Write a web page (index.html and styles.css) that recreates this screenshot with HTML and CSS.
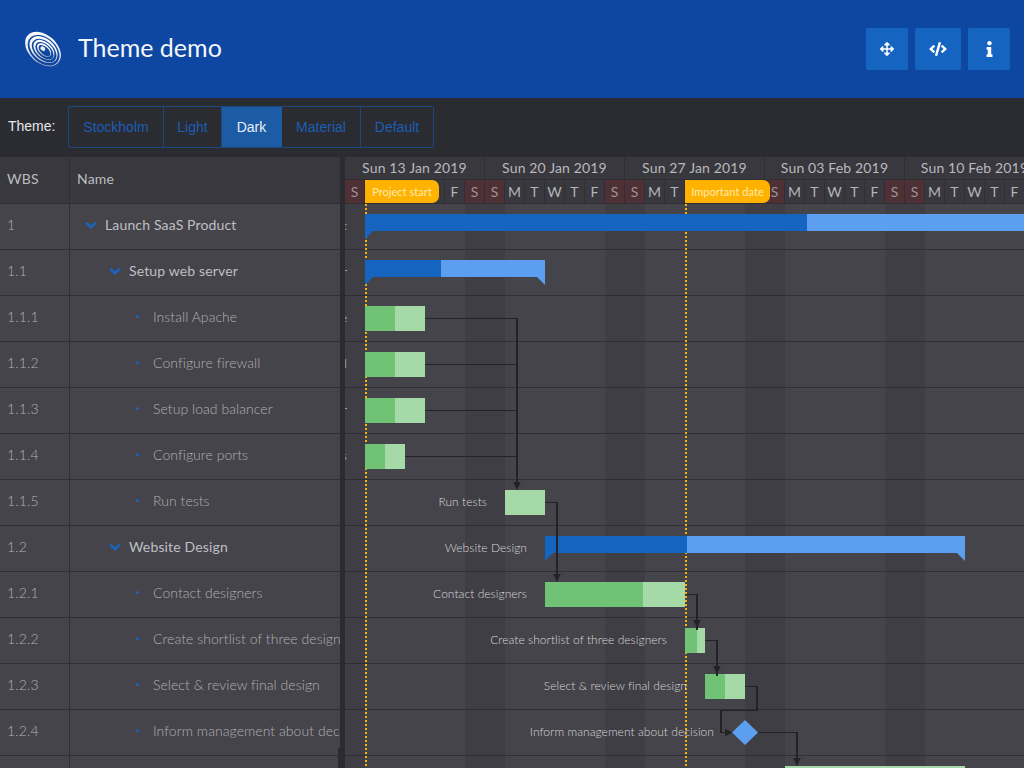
FILE: index.html
```html
<!DOCTYPE html>
<html lang="en">
<head>
<meta charset="utf-8">
<title>Theme demo</title>
<link rel="stylesheet" href="styles.css">
</head>
<body>
<div class="app">
  <header class="top">
    <svg class="logo" viewBox="0 0 36 36" aria-hidden="true">
      <defs>
        <linearGradient id="lg" x1="0" y1="0" x2="1" y2="1">
          <stop offset="0" stop-color="#ffffff"/>
          <stop offset="0.55" stop-color="#eef0f4"/>
          <stop offset="1" stop-color="#9da2ab"/>
        </linearGradient>
      </defs>
      <g transform="rotate(42 18 18)">
        <ellipse cx="18" cy="18" rx="20.5" ry="14" fill="url(#lg)"/>
        <ellipse cx="19.25" cy="18.5" rx="18.25" ry="12.4" fill="#0d47a1"/>
        <ellipse cx="18.75" cy="18" rx="16.25" ry="10.8" fill="url(#lg)"/>
        <ellipse cx="19.85" cy="18.4" rx="14.35" ry="9.2" fill="#0d47a1"/>
        <ellipse cx="19.25" cy="18" rx="12.25" ry="7.8" fill="url(#lg)"/>
        <ellipse cx="20.25" cy="18.3" rx="10.75" ry="6.4" fill="#0d47a1"/>
        <ellipse cx="19.5" cy="18" rx="8.5" ry="5" fill="url(#lg)"/>
        <ellipse cx="20.2" cy="18.2" rx="7.2" ry="3.8" fill="#0d47a1"/>
        <ellipse cx="17.75" cy="18" rx="2.75" ry="2" fill="url(#lg)"/>
      </g>
    </svg>
    <h1 class="title">Theme demo</h1>
    <div class="actions">
      <button class="act"><svg class="ico" viewBox="0 0 512 512"><path d="M352.201 425.775l-79.196 79.196c-9.373 9.373-24.568 9.373-33.941 0l-79.196-79.196c-15.119-15.119-4.411-40.971 16.971-40.97h51.162L228 284H127.196v51.162c0 21.382-25.851 32.09-40.971 16.971L7.029 272.937c-9.373-9.373-9.373-24.569 0-33.941L86.225 159.8c15.119-15.119 40.971-4.411 40.971 16.971V228H228V127.196h-51.23c-21.382 0-32.09-25.851-16.971-40.971l79.196-79.196c9.373-9.373 24.568-9.373 33.941 0l79.196 79.196c15.119 15.119 4.411 40.971-16.971 40.971h-51.162V228h100.804v-51.162c0-21.382 25.851-32.09 40.97-16.971l79.196 79.196c9.373 9.373 9.373 24.569 0 33.941L425.773 352.2c-15.119 15.119-40.971 4.411-40.97-16.971V284H284v100.804h51.23c21.382 0 32.09 25.851 16.971 40.971z"/></svg></button>
      <button class="act wide"><svg class="ico code" viewBox="0 0 640 512"><path d="M278.9 511.5l-61-17.7c-6.4-1.8-10-8.5-8.2-14.9L346.2 8.7c1.8-6.4 8.5-10 14.9-8.2l61 17.7c6.4 1.8 10 8.5 8.2 14.9L293.8 503.3c-1.9 6.4-8.5 10.1-14.9 8.2zm-114-112.2l43.5-46.4c4.6-4.9 4.3-12.7-.8-17.2L117 256l90.6-79.7c5.1-4.5 5.5-12.3.8-17.2l-43.5-46.4c-4.5-4.8-12.1-5.1-17-.5L3.8 247.2c-5.1 4.7-5.1 12.8 0 17.5l144.1 135.1c4.9 4.6 12.5 4.4 17-.5zm327.2.6l144.1-135.1c5.1-4.7 5.1-12.8 0-17.5L492.1 112.1c-4.8-4.5-12.4-4.3-17 .5L431.6 159c-4.6 4.9-4.3 12.7.8 17.2L523 256l-90.6 79.7c-5.1 4.5-5.5 12.3-.8 17.2l43.5 46.4c4.5 4.9 12.1 5.1 17 .6z"/></svg></button>
      <button class="act"><svg class="ico info" viewBox="0 0 192 512"><path d="M20 424.229h20V279.771H20c-11.046 0-20-8.954-20-20V212c0-11.046 8.954-20 20-20h112c11.046 0 20 8.954 20 20v212.229h20c11.046 0 20 8.954 20 20V492c0 11.046-8.954 20-20 20H20c-11.046 0-20-8.954-20-20v-47.771c0-11.046 8.954-20 20-20zM96 0C56.235 0 24 32.235 24 72s32.235 72 72 72 72-32.235 72-72S135.764 0 96 0z"/></svg></button>
    </div>
  </header>

  <div class="toolbar">
    <span class="tlabel">Theme:</span>
    <div class="btngroup">
      <button class="tb t-stockholm">Stockholm</button>
      <button class="tb t-light">Light</button>
      <button class="tb t-dark on">Dark</button>
      <button class="tb t-material">Material</button>
      <button class="tb t-default">Default</button>
    </div>
  </div>

  <div class="gantt">
    <section class="left">
      <div class="row head">
        <div class="cwbs">WBS</div>
        <div class="cname">Name</div>
      </div>
      <div class="row"><div class="cwbs">1</div><div class="cname l1 parent"><svg class="chev" viewBox="0 0 12 8"><path d="M1.2 1.6 6 6.2l4.8-4.6"/></svg>Launch SaaS Product</div></div>
      <div class="row"><div class="cwbs">1.1</div><div class="cname l2 parent"><svg class="chev" viewBox="0 0 12 8"><path d="M1.2 1.6 6 6.2l4.8-4.6"/></svg>Setup web server</div></div>
      <div class="row"><div class="cwbs">1.1.1</div><div class="cname l3"><i class="dot"></i>Install Apache</div></div>
      <div class="row"><div class="cwbs">1.1.2</div><div class="cname l3"><i class="dot"></i>Configure firewall</div></div>
      <div class="row"><div class="cwbs">1.1.3</div><div class="cname l3"><i class="dot"></i>Setup load balancer</div></div>
      <div class="row"><div class="cwbs">1.1.4</div><div class="cname l3"><i class="dot"></i>Configure ports</div></div>
      <div class="row"><div class="cwbs">1.1.5</div><div class="cname l3"><i class="dot"></i>Run tests</div></div>
      <div class="row"><div class="cwbs">1.2</div><div class="cname l2 parent"><svg class="chev" viewBox="0 0 12 8"><path d="M1.2 1.6 6 6.2l4.8-4.6"/></svg>Website Design</div></div>
      <div class="row"><div class="cwbs">1.2.1</div><div class="cname l3"><i class="dot"></i>Contact designers</div></div>
      <div class="row"><div class="cwbs">1.2.2</div><div class="cname l3"><i class="dot"></i>Create shortlist of three designers</div></div>
      <div class="row"><div class="cwbs">1.2.3</div><div class="cname l3"><i class="dot"></i>Select &amp; review final design</div></div>
      <div class="row"><div class="cwbs">1.2.4</div><div class="cname l3"><i class="dot"></i>Inform management about decision</div></div>
      <div class="row"><div class="cwbs"></div><div class="cname l3"></div></div>
      <i class="scrollstub"></i>
    </section>
    <div class="splitter"></div>
    <section class="right">
      <div class="thead">
        <div class="weeks">
          <div class="week">Sun 13 Jan 2019</div>
          <div class="week">Sun 20 Jan 2019</div>
          <div class="week">Sun 27 Jan 2019</div>
          <div class="week">Sun 03 Feb 2019</div>
          <div class="week">Sun 10 Feb 2019</div>
        </div>
        <div class="days">
          <div class="day we">S</div><div class="day">M</div><div class="day">T</div><div class="day">W</div><div class="day">T</div><div class="day">F</div><div class="day we">S</div>
          <div class="day we">S</div><div class="day">M</div><div class="day">T</div><div class="day">W</div><div class="day">T</div><div class="day">F</div><div class="day we">S</div>
          <div class="day we">S</div><div class="day">M</div><div class="day">T</div><div class="day">W</div><div class="day">T</div><div class="day">F</div><div class="day we">S</div>
          <div class="day we">S</div><div class="day">M</div><div class="day">T</div><div class="day">W</div><div class="day">T</div><div class="day">F</div><div class="day we">S</div>
          <div class="day we">S</div><div class="day">M</div><div class="day">T</div><div class="day">W</div><div class="day">T</div><div class="day">F</div>
        </div>
        <div class="flag" style="left:20px;width:74px">Project start</div>
        <div class="flag" style="left:340px;width:85px">Important date</div>
      </div>
      <div class="tbody">
        <div class="trow"></div><div class="trow"></div><div class="trow"></div><div class="trow"></div><div class="trow"></div><div class="trow"></div><div class="trow"></div><div class="trow"></div><div class="trow"></div><div class="trow"></div><div class="trow"></div><div class="trow"></div><div class="trow"></div>

        <i class="band" style="left:0;width:20px"></i>
        <i class="band" style="left:120px"></i>
        <i class="band" style="left:260px"></i>
        <i class="band" style="left:400px"></i>
        <i class="band" style="left:540px"></i>

        <i class="vline" style="left:20px"></i>
        <i class="vline" style="left:340px"></i>

        <div class="bar parent-bar" style="left:20px;top:10px;width:760px"><b class="done" style="width:442px"></b><span class="lbl">Launch SaaS Product</span></div>
        <div class="bar parent-bar" style="left:20px;top:56px;width:180px"><b class="done" style="width:76px"></b><span class="lbl">Setup web server</span></div>
        <div class="bar task" style="left:20px;top:102px;width:60px"><b class="done" style="width:30px"></b><span class="lbl">Install Apache</span></div>
        <div class="bar task" style="left:20px;top:148px;width:60px"><b class="done" style="width:30px"></b><span class="lbl">Configure firewall</span></div>
        <div class="bar task" style="left:20px;top:194px;width:60px"><b class="done" style="width:30px"></b><span class="lbl">Setup load balancer</span></div>
        <div class="bar task" style="left:20px;top:240px;width:40px"><b class="done" style="width:20px"></b><span class="lbl">Configure ports</span></div>
        <div class="bar task" style="left:160px;top:286px;width:40px"><span class="lbl">Run tests</span></div>
        <div class="bar parent-bar" style="left:200px;top:332px;width:420px"><b class="done" style="width:142px"></b><span class="lbl">Website Design</span></div>
        <div class="bar task" style="left:200px;top:378px;width:140px"><b class="done" style="width:98px"></b><span class="lbl">Contact designers</span></div>
        <div class="bar task" style="left:340px;top:424px;width:20px"><b class="done" style="width:12px"></b><span class="lbl">Create shortlist of three designers</span></div>
        <div class="bar task" style="left:360px;top:470px;width:40px"><b class="done" style="width:20px"></b><span class="lbl">Select &amp; review final design</span></div>
        <div class="milestone" style="left:387px;top:516px"><i class="gem"></i><span class="lbl">Inform management about decision</span></div>
        <div class="bar task" style="left:440px;top:562px;width:180px"></div>

        <svg class="deps" viewBox="345 204 679 564" aria-hidden="true">
          <path class="h" d="M425 318.5H517M425 364.5H517M425 410.5H517M405 456.5H517M545 502.5H557M685 594.5H697M705 640.5H717M745 686.5H757M757 710.5H721M721 732.5H726M758 732.5H797"/>
          <path class="v" d="M517 318V484M557 502V576M697 594V630M717 640V676M757 686V711M721 710V733M797 732V760"/>
          <path class="a" d="M513.2 482h7.6L517 490zM553.2 574h7.6L557 582zM693.2 620h7.6L697 628zM713.2 666h7.6L717 674zM793.2 758h7.6L797 766zM725 728.7v7.6L732.5 732.5z"/>
        </svg>
      </div>
    </section>
  </div>
</div>
</body>
</html>
```

FILE: styles.css
```css
* { box-sizing: border-box; }
html, body { margin: 0; height: 100%; overflow: hidden; }
body { font-family: Lato, "Liberation Sans", sans-serif; background: #2b2b32; }

.app { display: flex; flex-direction: column; height: 768px; overflow: hidden; }

.top { flex: 0 0 98px; background: #0d47a1; display: flex; align-items: center; padding: 0 14px 0 25px; }
.logo { width: 36px; height: 36px; flex: none; margin-top: -1px; overflow: visible; }
.title { margin: -4px 0 0 17px; font-size: 25px; font-weight: 400; color: #f4f6fa; line-height: 1; }
.actions { margin-left: auto; display: flex; gap: 7px; }
.act { width: 42px; height: 42px; border: 0; border-radius: 2px; background: #1565c0; padding: 0; display: flex; align-items: center; justify-content: center; }
.act.wide { width: 46px; }
.ico { height: 14px; width: 14px; fill: #fff; display: block; }
.ico.code { width: 18px; }
.ico.info { width: 7px; height: 16px; }

.toolbar { flex: 0 0 59px; display: flex; align-items: center; padding: 0 0 0 8px; background: #2b2b32; }
.tlabel { font-family: "Liberation Sans", Arial, sans-serif; font-size: 14px; color: #e6e6e8; width: 60px; margin-top: -4px; }
.btngroup { display: flex; height: 42px; border: 1px solid #1c477f; border-radius: 2px; margin-top: -1px; }
.tb { font: 14px "Liberation Sans", Arial, sans-serif; color: #1a5fb4; background: transparent; border: 0; border-right: 1px solid #1c477f; padding: 0; }
.tb:last-child { border-right: 0; }
.tb.on { background: #1b5ca5; color: #e8eef6; border-right-color: #1b5ca5; }
.t-stockholm { width: 95px; }
.t-light { width: 58px; }
.t-dark { width: 60px; }
.t-material { width: 79px; }
.t-default { width: 72px; }

.gantt { flex: 1; min-height: 0; display: flex; }
.left { position: relative; flex: 0 0 340px; background: #45444a; overflow: hidden; }
.splitter { flex: 0 0 5px; background: #2b2b32; }
.right { flex: 1; min-width: 0; overflow: hidden; background: #45444a; }

.row { display: flex; height: 46px; border-bottom: 1px solid #2f2f35; font-size: 14px; }
.row.head { height: 47px; background: #38383e; color: #bdbdc1; }
.cwbs { flex: 0 0 70px; border-right: 1px solid #2f2f35; padding: 0 0 4px 7px; display: flex; align-items: center; color: #b0b0b4; font-weight: 300; letter-spacing: 0.2px; }
.cname { flex: 1; min-width: 0; padding: 0 0 4px 7px; display: flex; align-items: center; white-space: nowrap; overflow: hidden; color: #b0b0b4; font-weight: 300; letter-spacing: 0.05px; }
.head .cwbs, .head .cname { color: #bdbdc1; font-weight: 400; letter-spacing: 0.2px; }
.cname.parent { color: #bfbfc3; font-weight: 400; letter-spacing: 0.15px; }
.cname.l1 { padding-left: 15px; }
.cname.l2 { padding-left: 39px; }
.cname.l3 { padding-left: 63px; }
.chev { flex: none; width: 12px; height: 8px; margin-right: 8px; fill: none; stroke: #1a65c0; stroke-width: 2.6; overflow: visible; }
.dot { flex: none; width: 3px; height: 3px; border-radius: 50%; background: #1a65c0; margin: 0 14px 0 3px; }
.scrollstub { position: absolute; right: 0; bottom: 0; width: 2px; height: 20px; background: #2b2b32; }

.thead { position: relative; height: 47px; background: #38383e; border-bottom: 1px solid #2f2f35; }
.weeks { display: flex; height: 23px; border-bottom: 1px solid #2f2f35; }
.week { flex: 0 0 140px; border-right: 1px solid #2f2f35; text-align: center; font-size: 14px; line-height: 22px; letter-spacing: 0.15px; color: #b9b9bd; white-space: nowrap; }
.days { display: flex; height: 23px; }
.day { flex: 0 0 20px; border-right: 1px solid #2f2f35; text-align: center; font-size: 14px; line-height: 23px; color: #b4b4b8; }
.day.we { background: #4f3034; color: #9a9597; }
.flag { position: absolute; top: 23px; height: 23px; background: #ffb300; color: #ffe9b5; border-radius: 0 7px 7px 0; font-size: 11px; letter-spacing: 0.05px; line-height: 23px; text-align: center; white-space: nowrap; }

.tbody { position: relative; height: 564px; overflow: hidden; }
.trow { height: 46px; border-bottom: 1px solid #2f2f35; }
.band { position: absolute; top: 0; bottom: 0; width: 40px; background: rgba(40, 40, 44, 0.2); }
.vline { position: absolute; top: 0; bottom: 0; width: 2px; background: repeating-linear-gradient(to bottom, #ffb300 0 2px, transparent 2px 4px); }

.bar { position: absolute; display: block; }
.done { display: block; height: 100%; }
.lbl { position: absolute; right: calc(100% + 18px); top: 10.5px; transform: translateY(-50%); font-size: 12px; font-weight: 300; letter-spacing: 0.05px; color: #d6d6d9; white-space: nowrap; }
.task { height: 25px; background: #a5d9a7; }
.task .done { background: #70c274; }
.parent-bar { height: 17px; background: #5c9ef0; }
.parent-bar .done { background: #1565c0; }
.parent-bar::before, .parent-bar::after { content: ""; position: absolute; top: 100%; width: 8px; height: 8px; }
.parent-bar::before { left: 0; background: #1565c0; clip-path: polygon(0 0, 100% 0, 0 100%); }
.parent-bar::after { right: 0; background: #5c9ef0; clip-path: polygon(0 0, 100% 0, 100% 100%); }
.milestone { position: absolute; width: 26px; height: 25px; }
.gem { display: block; width: 100%; height: 100%; background: #5c9ef0; clip-path: polygon(50% 0, 100% 50%, 50% 100%, 0 50%); }

.deps { position: absolute; left: 0; top: 0; width: 679px; height: 564px; fill: none; }
.deps .h { stroke: #232327; stroke-width: 1; }
.deps .v { stroke: #232327; stroke-width: 2; }
.deps .a { fill: #232327; }
```
